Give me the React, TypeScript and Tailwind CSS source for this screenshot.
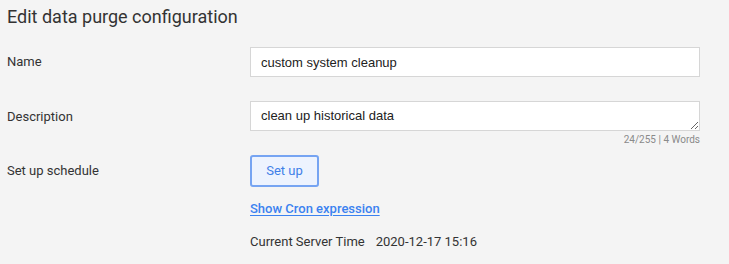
export default function App() {
  return (
    <div className="h-[264px] w-[729px] bg-[#f4f4f4] pl-[7px] pr-[29px] pt-[5px] font-['Roboto',sans-serif] text-[#333]">
      <h1 className="text-[18px] leading-[24px] font-normal text-[#333]">Edit data purge configuration</h1>

      <div className="mt-[18px] flex items-center">
        <div className="w-[243px] text-[13px]">Name</div>
        <input
          readOnly
          value="custom system cleanup"
          className="h-[30px] flex-1 border border-[#d6d6d6] bg-white px-[10px] font-['Liberation_Sans',sans-serif] text-[13px] text-[#222] outline-none"
        />
      </div>

      <div className="mt-[24px] flex items-start">
        <div className="w-[243px] pt-[6px] text-[13px]">Description</div>
        <div className="flex flex-1 flex-col items-end">
          <textarea
            readOnly
            value="clean up historical data"
            className="block h-[30px] w-full resize-y border border-[#d6d6d6] bg-white px-[10px] py-[6px] font-['Liberation_Sans',sans-serif] text-[13px] leading-[16px] text-[#222] outline-none"
          />
          <div className="mt-[3px] text-[10px] leading-[12px] text-[#8a8a8a]">24/255 | 4 Words</div>
        </div>
      </div>

      <div className="mt-[9px] flex items-center">
        <div className="w-[243px] text-[13px]">Set up schedule</div>
        <button className="h-[32px] w-[69px] rounded-[3px] border-2 border-[#76a4f2] bg-[#edf3fe] text-[13px] font-normal text-[#3f80e8]">
          Set up
        </button>
      </div>

      <div className="ml-[243px] mt-[14px] text-[13px] font-medium leading-[16px] text-[#3b82f0] underline underline-offset-2">
        Show Cron expression
      </div>

      <div className="ml-[243px] mt-[17px] flex text-[13px] leading-[16px] text-[#333]">
        <span>Current Server Time</span>
        <span className="ml-[11px]">2020-12-17 15:16</span>
      </div>
    </div>
  );
}
